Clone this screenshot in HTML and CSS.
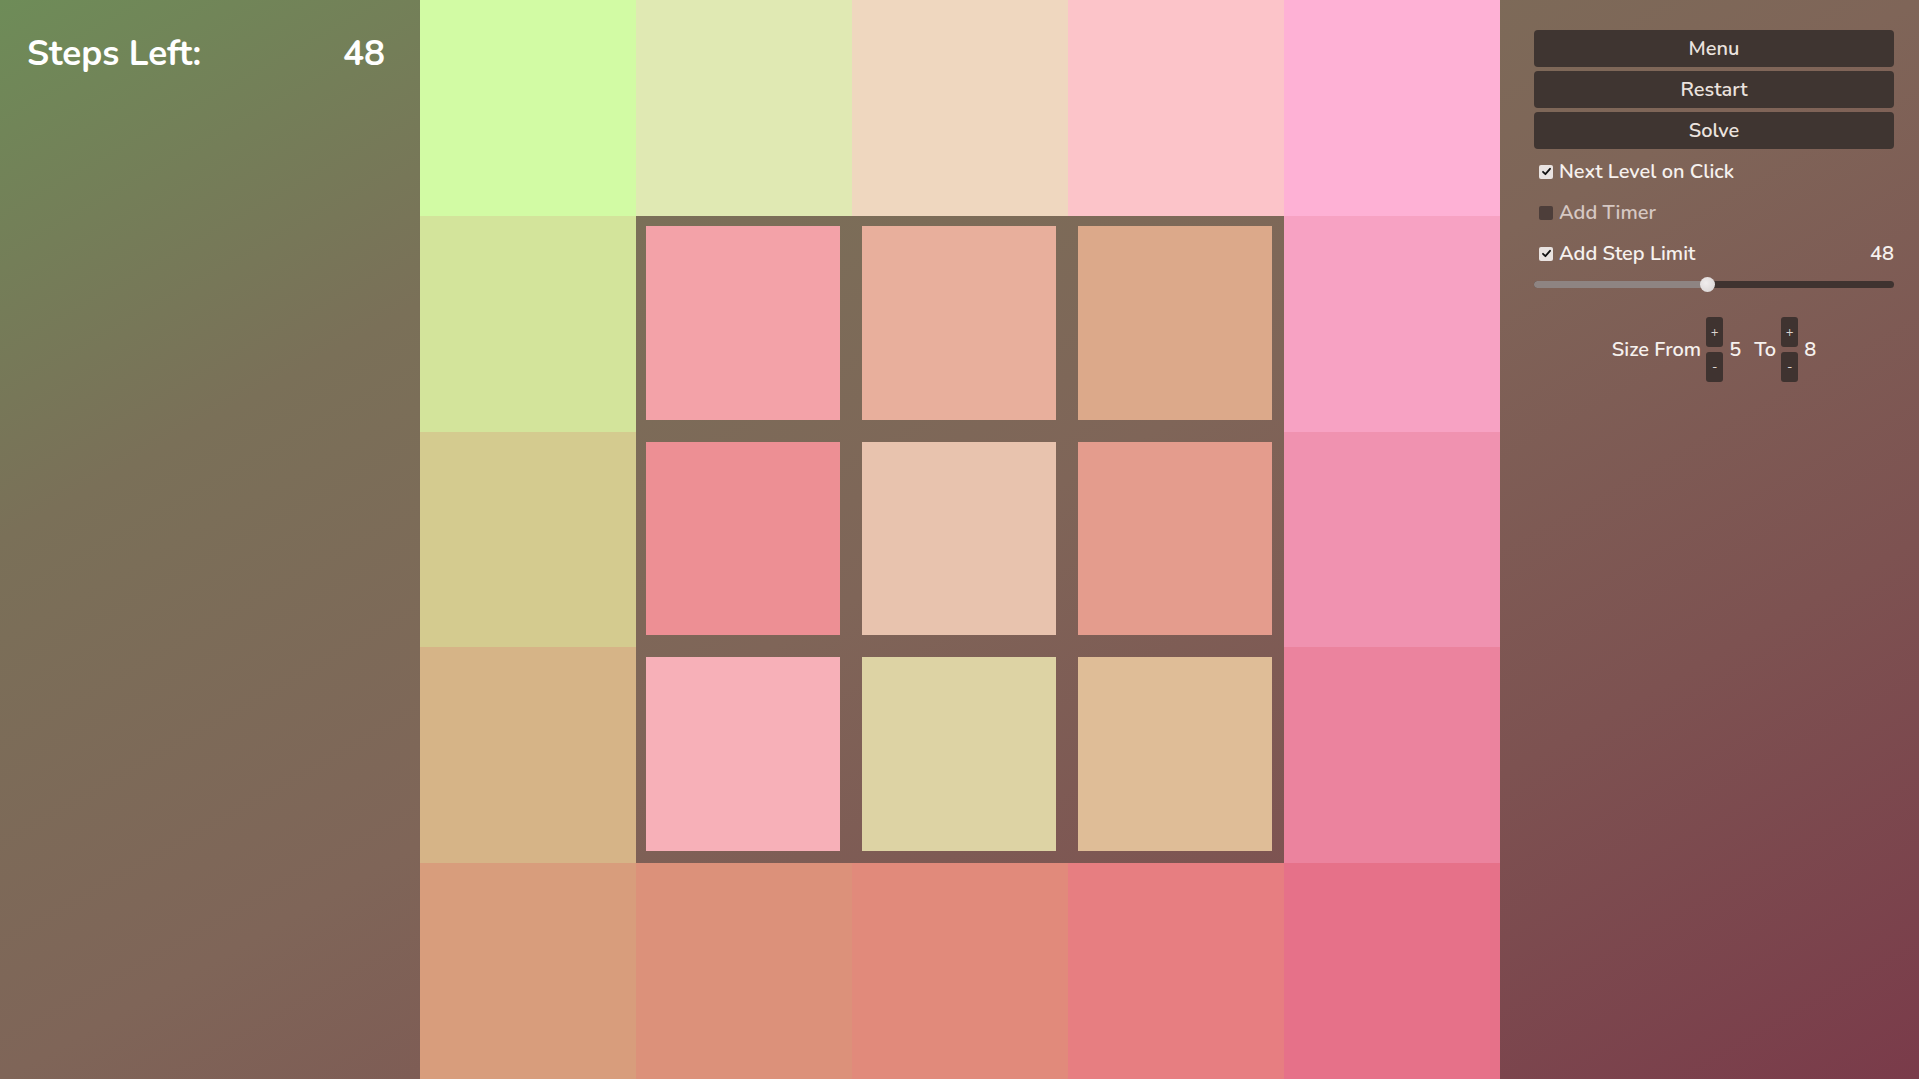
FILE: index.html
```html
<!DOCTYPE html>
<html>
<head>
<meta charset="utf-8">
<link rel="stylesheet" href="styles.css">
</head>
<body>
<div class="app">
  <aside class="left">
    <div class="steps">
      <span>Steps Left:</span>
      <span>48</span>
    </div>
  </aside>
  <main class="board">
    <div class="frame">
      <div class="tile" style="background:#f3a2a8"></div>
      <div class="tile" style="background:#e8af9c"></div>
      <div class="tile" style="background:#dca98a"></div>
      <div class="tile" style="background:#ed8f94"></div>
      <div class="tile" style="background:#e8c3ae"></div>
      <div class="tile" style="background:#e49c8d"></div>
      <div class="tile" style="background:#f7b0b8"></div>
      <div class="tile" style="background:#ddd3a4"></div>
      <div class="tile" style="background:#dfbd97"></div>
    </div>

    <div class="cell" style="background:#d2fba4"></div>
    <div class="cell" style="background:#e0e9b3"></div>
    <div class="cell" style="background:#efd7bf"></div>
    <div class="cell" style="background:#fcc4c9"></div>
    <div class="cell" style="background:#feb1d5"></div>

    <div class="cell" style="background:#d3e49b"></div>
    <div class="cell" style="background:#f7a2c3"></div>

    <div class="cell" style="background:#d4cb8f"></div>
    <div class="cell" style="background:#f092b0"></div>

    <div class="cell" style="background:#d6b487"></div>
    <div class="cell" style="background:#eb839e"></div>

    <div class="cell" style="background:#d89d7c"></div>
    <div class="cell" style="background:#dc917a"></div>
    <div class="cell" style="background:#e18a7b"></div>
    <div class="cell" style="background:#e77e81"></div>
    <div class="cell" style="background:#e67189"></div>
  </main>
  <aside class="right">
    <button class="btn">Menu</button>
    <button class="btn">Restart</button>
    <button class="btn">Solve</button>
    <div class="opts">
      <div class="opt">
        <span class="box on"><svg viewBox="0 0 13 13" width="13" height="13"><path d="M3 6.8 L5.4 9.2 L10 3.8" fill="none" stroke="#111" stroke-width="1.8" stroke-linecap="round" stroke-linejoin="round"/></svg></span>
        <span class="lbl">Next Level on Click</span>
      </div>
      <div class="opt dim">
        <span class="box"></span>
        <span class="lbl">Add Timer</span>
      </div>
      <div class="opt">
        <span class="box on"><svg viewBox="0 0 13 13" width="13" height="13"><path d="M3 6.8 L5.4 9.2 L10 3.8" fill="none" stroke="#111" stroke-width="1.8" stroke-linecap="round" stroke-linejoin="round"/></svg></span>
        <span class="lbl">Add Step Limit</span>
        <span class="val">48</span>
      </div>
    </div>
    <div class="slider">
      <div class="fill" style="width:48%"></div>
      <div class="thumb" style="left:48%"></div>
    </div>
    <div class="size">
      <span class="txt">Size From</span>
      <span class="pm"><span class="pmb">+</span><span class="pmb">-</span></span>
      <span class="num">5</span>
      <span class="txt to">To</span>
      <span class="pm"><span class="pmb">+</span><span class="pmb">-</span></span>
      <span class="num">8</span>
    </div>
  </aside>
</div>
</body>
</html>
```
FILE: styles.css
```css
* { box-sizing: border-box; }
html, body { margin: 0; padding: 0; }
body {
  width: 1919px;
  height: 1079px;
  overflow: hidden;
  font-family: "Nunito", "Lato", "Noto Sans", sans-serif;
  background: linear-gradient(to bottom right, #6e8c58 0%, #7a7058 25%, #7f6558 50%, #7d5251 75%, #7a3b4a 100%);
  color: #fff;
}
.app {
  display: flex;
  width: 1919px;
  height: 1079px;
}
.left {
  width: 420px;
  flex: none;
  padding: 34px 35px 0 27px;
}
.steps {
  display: flex;
  justify-content: space-between;
  font-size: 35px;
  font-weight: 700;
  line-height: 40px;
}
.board {
  width: 1080px;
  height: 1079px;
  flex: none;
  display: grid;
  grid-template-columns: repeat(5, 216px);
  grid-template-rows: repeat(5, 1fr);
}
.frame {
  grid-column: 2 / 5;
  grid-row: 2 / 5;
  display: grid;
  grid-template-columns: repeat(3, 1fr);
  grid-template-rows: repeat(3, 1fr);
  gap: 22px;
  padding: 10px 12px 12px 10px;
}
.right {
  width: 419px;
  flex: none;
  padding: 30px 25px 0 34px;
  display: flex;
  flex-direction: column;
  gap: 4px;
}
.btn {
  display: block;
  width: 100%;
  height: 37px;
  border: 0;
  border-radius: 4px;
  background: #3f3531;
  color: #ebe3df;
  font-family: inherit;
  font-size: 20px;
  font-weight: 600;
  padding: 0;
}
.opts {
  margin-top: -2px;
  display: flex;
  flex-direction: column;
}
.opt {
  height: 41px;
  display: flex;
  align-items: center;
  padding-left: 5px;
  font-size: 20px;
  font-weight: 600;
  color: #f6f1ee;
}
.opt.dim { color: #d6c8c3; }
.box {
  width: 14px;
  height: 14px;
  border-radius: 2px;
  background: #4d3e3a;
  margin-right: 6px;
  display: flex;
  align-items: center;
  justify-content: center;
}
.box.on { background: #e9e3e1; }
.val { margin-left: auto; }
.slider {
  position: relative;
  height: 7px;
  margin-top: 3px;
  border-radius: 4px;
  background: #3f3330;
}
.fill {
  height: 7px;
  border-radius: 4px 0 0 4px;
  background: #8e8482;
}
.thumb {
  position: absolute;
  top: -4px;
  width: 15px;
  height: 15px;
  margin-left: -7px;
  border-radius: 50%;
  background: radial-gradient(circle at 40% 40%, #f0eded, #d6d1d1);
}
.size {
  margin-top: 25px;
  display: flex;
  align-items: center;
  justify-content: center;
  font-size: 20px;
  font-weight: 600;
  color: #f6f1ee;
}
.pm {
  display: flex;
  flex-direction: column;
  gap: 5px;
  margin: 0 6px 0 5px;
}
.pmb {
  width: 17px;
  height: 30px;
  border-radius: 3px;
  background: #3f3330;
  color: #ded6d2;
  font-size: 13px;
  font-weight: 400;
  display: flex;
  align-items: center;
  justify-content: center;
}
.to { margin-left: 13px; }
```
